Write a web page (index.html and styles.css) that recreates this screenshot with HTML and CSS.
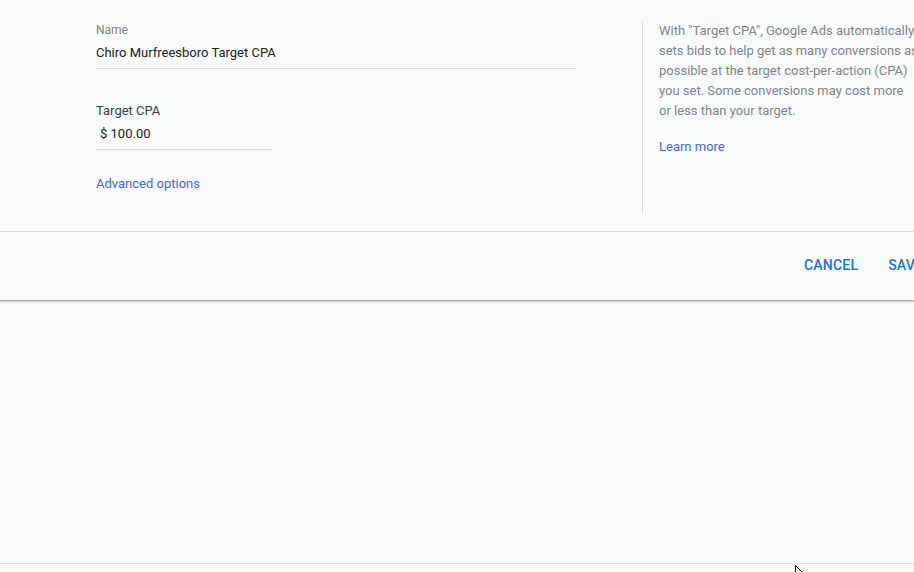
FILE: index.html
```html
<!DOCTYPE html>
<html>
<head>
<meta charset="utf-8">
<link rel="stylesheet" href="styles.css">
</head>
<body>
<div class="panel">
  <div class="content">
    <div class="form">
      <div class="field name-field">
        <div class="label small">Name</div>
        <div class="value">Chiro Murfreesboro Target CPA</div>
      </div>
      <div class="field cpa-field">
        <div class="label">Target CPA</div>
        <div class="value cpa">$ 100.00</div>
      </div>
      <a class="link adv">Advanced options</a>
    </div>
    <div class="sidebar">
      <p class="help">With "Target CPA", Google Ads automatically<br>sets bids to help get as many conversions as<br>possible at the target cost-per-action (CPA)<br>you set. Some conversions may cost more<br>or less than your target.</p>
      <a class="link learn">Learn more</a>
    </div>
  </div>
  <div class="footer">
    <span class="btn">CANCEL</span>
    <span class="btn">SAVE</span>
  </div>
</div>
<div class="rest"></div>
<div class="bottom"></div>
<svg class="cursor" width="12" height="7" viewBox="0 0 12 7"><path d="M0.5 0.5 L0.5 10 L2.8 7.8 L4.5 11 M0.5 0.5 L7.5 7.5 L4.5 7.5" fill="#fff" stroke="#000" stroke-width="1"/></svg>
</body>
</html>
```

FILE: styles.css
```css
html, body {
  margin: 0;
  padding: 0;
  background: #f8f9f9;
  font-family: Roboto, "Liberation Sans", sans-serif;
  width: 914px;
  height: 572px;
  overflow: hidden;
  position: relative;
}
.panel {
  width: 914px;
  height: 300px;
  background: #f8f9f9;
  box-shadow: 0 1px 0 #a9aaaa, 0 2px 0 #d4d5d5, 0 3px 2px rgba(0,0,0,0.05);
  position: relative;
  z-index: 1;
  overflow: hidden;
}
.content {
  display: flex;
  height: 231px;
  box-sizing: border-box;
  padding-top: 20px;
}
.form {
  margin-left: 96px;
  width: 480px;
  flex-shrink: 0;
  display: flex;
  flex-direction: column;
}
.label {
  font-size: 13px;
  line-height: 20px;
  color: #3c4043;
}
.label.small {
  font-size: 12px;
  line-height: 16px;
  color: #80868b;
  margin-top: 2px;
}
.value {
  font-size: 13px;
  line-height: 20px;
  color: #202124;
  margin-top: 5px;
  padding-bottom: 5px;
  border-bottom: 1px solid #dadce0;
}
.cpa-field {
  margin-top: 32px;
  width: 176px;
}
.value.cpa {
  margin-top: 3px;
  padding-left: 4px;
}
.link {
  font-size: 13px;
  line-height: 20px;
  color: #3f6ae0;
  cursor: pointer;
}
.adv {
  margin-top: 24px;
}
.sidebar {
  margin-left: 66px;
  margin-top: 2px;
  height: 192px;
  border-left: 1px solid #dadce0;
  padding-left: 16px;
  flex-shrink: 0;
  width: 300px;
  white-space: nowrap;
}
.help {
  margin: -1px 0 0 0;
  white-space: nowrap;
  font-size: 13px;
  line-height: 20px;
  color: #80868b;
}
.learn {
  display: block;
  margin-top: 16px;
}
.footer {
  height: 68px;
  border-top: 1px solid #dadce0;
  display: flex;
  align-items: center;
  padding-left: 804px;
  gap: 30px;
  white-space: nowrap;
}
.btn {
  font-size: 14px;
  font-weight: 500;
  color: #1a73e8;
  letter-spacing: 0.2px;
  line-height: 20px;
  margin-top: -2px;
}
.rest {
  height: 263px;
}
.bottom {
  border-top: 1px solid #dadce0;
}
.cursor {
  position: absolute;
  left: 795px;
  top: 565px;
  overflow: hidden;
}
```
